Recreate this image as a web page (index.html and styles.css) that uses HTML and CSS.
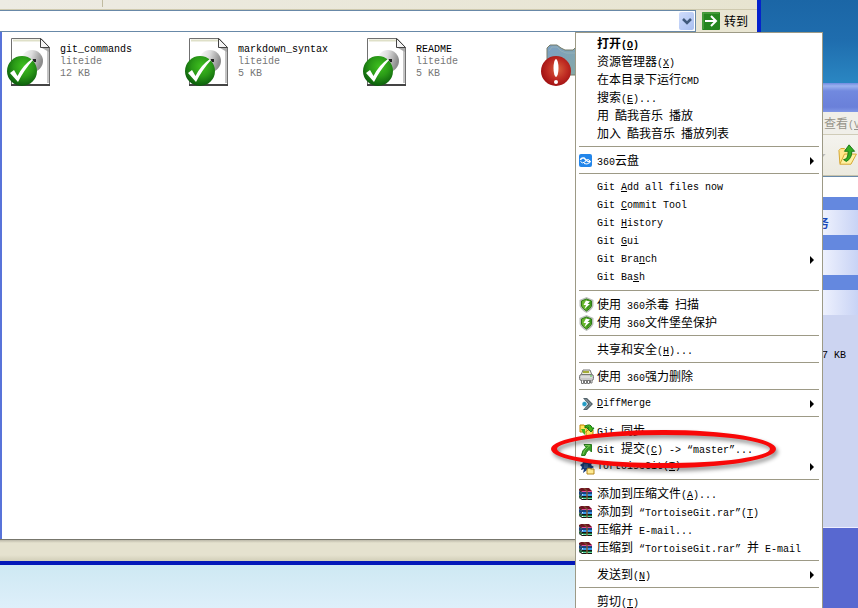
FILE: index.html
```html
<!DOCTYPE html>
<html lang="zh-CN">
<head>
<meta charset="utf-8">
<title>TortoiseGit</title>
<link rel="stylesheet" href="styles.css">
</head>
<body>
<svg class="defs" aria-hidden="true">
  <defs>
    <radialGradient id="green" cx=".55" cy=".35" r=".65"><stop offset="0" stop-color="#3fc11f"/><stop offset=".5" stop-color="#2a9a17"/><stop offset="1" stop-color="#0b5c0c"/></radialGradient>
    <radialGradient id="red" cx=".55" cy=".45" r=".6"><stop offset="0" stop-color="#d8603c"/><stop offset=".55" stop-color="#be2a22"/><stop offset="1" stop-color="#9c0d10"/></radialGradient>
    <linearGradient id="ball" x2="1" y2=".3"><stop offset="0" stop-color="#fff"/><stop offset=".5" stop-color="#dcdcdc"/><stop offset="1" stop-color="#8c8c8c"/></linearGradient>
    <linearGradient id="folder" x2="1" y2="1"><stop offset="0" stop-color="#7b9fc4"/><stop offset="1" stop-color="#86aaa2"/></linearGradient>
  </defs>
  <symbol id="file" viewBox="0 0 44 50">
    <path d="M4.500 1.500H34L42.500 10.500V47.500H4.500Z" fill="#fff" stroke="#707070"/>
    <path d="M6 3.500H33" stroke="#dfe0c8" stroke-width="2"/>
    <path d="M41 11V46" stroke="#c4c4c4" stroke-width="2"/>
    <path d="M4 48H43" stroke="#444" stroke-width="2"/>
    <path d="M33.500 1.500V10.500H42.500Z" fill="#f4f4f4" stroke="#444"/>
    <path d="M35 11H42V15Z" fill="#aaa"/>
    <ellipse cx="25" cy="24" rx="11" ry="11" fill="url(#ball)"/>
    <path d="M25 22h4v3h-2z" fill="#222"/>
    <circle cx="15" cy="34" r="15" fill="url(#green)"/>
    <path d="M3 36L7 33L10.500 39Q16 28 25 22L26 23Q17 33 11 45Z" fill="#fff"/>
  </symbol>
  <symbol id="folder-alert" viewBox="0 0 44 50">
    <path d="M6 20V11L9 8H16L20 11L24 13H32L35 10H44V38H6Z" fill="url(#folder)" stroke="#777d68"/>
    <path d="M8 14L11 10H16L20 14L25 16H44" fill="none" stroke="#93b0b8"/>
    <circle cx="15" cy="34" r="15" fill="url(#red)"/>
    <ellipse cx="15" cy="31" rx="2.500" ry="9" fill="#fff"/><circle cx="15" cy="45" r="2" fill="#fff"/>
  </symbol>
  <symbol id="cloud" viewBox="0 0 16 16">
    <rect x="0" y="1" width="13" height="13" rx="2" fill="#2386ea"/>
    <path d="M1.500 7Q2 4.500 5 5Q6 6 7.500 7.500Q10 9.500 11.500 8" fill="none" stroke="#fff" stroke-width="1.500"/>
    <path d="M1.500 8.500Q3 11 6 9Q7 6 9.500 6.500Q12 8 11 9.500Q8 12 5 10.500" fill="none" stroke="#fff"/>
  </symbol>
  <symbol id="shield" viewBox="0 0 16 16">
    <path d="M7.500 0L14.500 3V9Q13 13 7.500 16Q2 13 .5 9V3Z" fill="#b9bdb9"/>
    <path d="M7.500 2L12.500 4V9Q11 12 7.500 14Q4 12 2.500 9V4Z" fill="#66b52c" stroke="#2f7d17"/>
    <path d="M7.500 2.500L12 4.500V8L7.500 14Z" fill="#3c941c"/>
    <path d="M7 3.500L4.500 8H7L5.500 12L11 7H8.500L11 4.500Z" fill="#fff"/>
  </symbol>
  <symbol id="shred" viewBox="0 0 16 16">
    <path d="M4 1H11L13 6H2Z" fill="#eef0d8" stroke="#777"/><path d="M4 3H10" stroke="#a4ac38" stroke-width="2"/>
    <rect x=".5" y="5.500" width="14" height="6" rx="2" fill="#c9c9c9" stroke="#777"/>
    <path d="M2 8H13" stroke="#eee"/><path d="M11 7H13" stroke="#4c4"/>
    <path d="M2.500 11V14.500H4.500V12M5.500 12V14.500H7.500V12M8.500 12V14.500H10.500V12M11.500 12V14H13V11" fill="#fff" stroke="#777"/>
  </symbol>
  <symbol id="diff" viewBox="0 0 16 16">
    <path d="M4 2H8L14 8L8 14H4L9 8Z" fill="#53636b"/><path d="M6.500 3L11.500 8L6.500 13" fill="none" stroke="#98a6ac"/>
    <circle cx="5.500" cy="8" r="2.500" fill="#219bc4" stroke="#fff" stroke-width=".5"/>
  </symbol>
  <symbol id="sync" viewBox="0 0 16 16">
    <path d="M1 2H5L6 3H8V9H1Z" fill="#ffe45c" stroke="#bd8500"/>
    <path d="M9 7H14V13H7V9Z" fill="#ffe45c" stroke="#bd8500"/>
    <path d="M6 3Q12 0 13 5H15L12 9L8 5H10Q9 3 6 5Z" fill="#42b51c" stroke="#11780d"/>
    <path d="M2 6H6V12L4 10Z" fill="#42b51c"/>
  </symbol>
  <symbol id="commit" viewBox="0 0 16 16">
    <path d="M5 3.500H12.500V11L10 8.500Q7 11 6 14.500H2.500Q3 9 7 6.500Z" fill="#359c27" stroke="#2b7d20"/>
    <path d="M6 4.500H11L8 7Q5 9 4 13.500" fill="none" stroke="#7acb55"/>
  </symbol>
  <symbol id="tortoise" viewBox="0 0 16 16">
    <path d="M1 6L4 4L3 2L6 3L8 1L10 3L14 3L12 6L15 8L12 10V13L8 11L4 14L5 10L2 11L3 8Z" fill="#173c79"/>
    <path d="M5 5H9V9H5Z" fill="#365a8c"/><path d="M8 10L10 9L12 10H15V15H8Z" fill="#ffeb91" stroke="#b4871c"/>
  </symbol>
  <symbol id="rar" viewBox="0 0 16 16">
    <path d="M0 3L2 2H10L13 5V6H3L0 4Z" fill="#6e1420"/><path d="M3 5H13V6H3Z" fill="#e04a98"/>
    <path d="M0 4L3 6H13V7H3L0 5ZM0 8L3 10H13V11H3L0 9ZM0 11L3 13H13V14H3L0 12Z" fill="#151515"/>
    <path d="M0 5L3 7V6H13V8H3V10L0 8Z" fill="#18427e"/><path d="M4 8H13V10H3Z" fill="#3a9aea"/>
    <path d="M0 9L3 11H13V12H3V13L0 11Z" fill="#176032"/><path d="M4 12H13V13H4Z" fill="#5edba1"/>
    <path d="M6 2L9 5V14H7V5L4 2Z" fill="#805c36" opacity=".7"/>
  </symbol>
  <symbol id="arrow" viewBox="0 0 4 8"><path d="M0 0L4 4L0 8Z" fill="#000"/></symbol>
</svg>

<section class="window back" aria-label="后方窗口">
  <div class="title"></div>
  <div class="menubar"><span class="zh">查看</span>(<u>V</u>)</div>
  <div class="tools">
    <svg width="4" height="3" viewBox="0 0 4 3"><path d="M0 0H4L1 3Z" fill="#bbb"/></svg>
    <svg width="22" height="24" viewBox="0 0 22 24"><path d="M1 7L3 5H7L9 7H14V21H2Z" fill="#ffe88a" stroke="#d3a22b"/><path d="M2 22L7 11H20L14 22Z" fill="#fff0a0" stroke="#d3a22b"/><path d="M6 17Q11 17 11 8H7L12 1L18 8H15Q15 16 9 19Z" fill="#31ad23" stroke="#197313"/></svg>
  </div>
  <div class="address-strip"></div>
  <div class="tasks">
    <div class="task"><span class="zh">务</span></div>
    <div class="task"></div>
    <div class="task open"></div>
    <div class="details">7 KB</div>
  </div>
</section>

<main class="window explorer">
  <div class="toolbar"><span></span></div>
  <div class="address">
    <div class="combo">
      <input type="text" aria-label="地址">
      <button class="drop" aria-label="展开地址"><svg width="10" height="7" viewBox="0 0 10 7"><path d="M1 1L5 5L9 1" fill="none" stroke="#40597c" stroke-width="2.500"/></svg></button>
    </div>
    <button class="go"><svg width="18" height="18" viewBox="0 0 18 18"><rect width="18" height="18" rx="1" fill="#25851f"/><path d="M1 17V1H17" fill="none" stroke="#62af55"/><path d="M3 9H14M9 4L14 9L9 14" fill="none" stroke="#fff" stroke-width="2"/></svg><span class="zh">转到</span></button>
  </div>
  <div class="files">
    <div class="tile"><svg><use href="#file"/></svg><p>git_commands<small>liteide</small><small>12 KB</small></p></div>
    <div class="tile"><svg><use href="#file"/></svg><p>markdown_syntax<small>liteide</small><small>5 KB</small></p></div>
    <div class="tile"><svg><use href="#file"/></svg><p>README<small>liteide</small><small>5 KB</small></p></div>
    <div class="tile"><svg><use href="#folder-alert"/></svg></div>
  </div>
  <div class="status"></div>
</main>

<nav class="menu" aria-label="快捷菜单">
  <button class="default"><i></i><span><span class="zh">打开</span>(<u>O</u>)</span></button>
  <button><i></i><span><span class="zh">资源管理器</span>(<u>X</u>)</span></button>
  <button><i></i><span><span class="zh">在本目录下运行</span>CMD</span></button>
  <button><i></i><span><span class="zh">搜索</span>(<u>E</u>)...</span></button>
  <button><i></i><span><span class="zh">用</span> <span class="zh">酷我音乐</span> <span class="zh">播放</span></span></button>
  <button><i></i><span><span class="zh">加入</span> <span class="zh">酷我音乐</span> <span class="zh">播放列表</span></span></button>
  <hr>
  <button><svg class="icon"><use href="#cloud"/></svg><span>360<span class="zh">云盘</span></span><svg class="more"><use href="#arrow"/></svg></button>
  <hr>
  <button><i></i><span>Git <u>A</u>dd all files now</span></button>
  <button><i></i><span>Git <u>C</u>ommit Tool</span></button>
  <button><i></i><span>Git <u>H</u>istory</span></button>
  <button><i></i><span>Git <u>G</u>ui</span></button>
  <button><i></i><span>Git Bra<u>n</u>ch</span><svg class="more"><use href="#arrow"/></svg></button>
  <button><i></i><span>Git Ba<u>s</u>h</span></button>
  <hr>
  <button><svg class="icon"><use href="#shield"/></svg><span><span class="zh">使用</span> 360<span class="zh">杀毒</span> <span class="zh">扫描</span></span></button>
  <button><svg class="icon"><use href="#shield"/></svg><span><span class="zh">使用</span> 360<span class="zh">文件堡垒保护</span></span></button>
  <hr>
  <button><i></i><span><span class="zh">共享和安全</span>(<u>H</u>)...</span></button>
  <hr>
  <button><svg class="icon"><use href="#shred"/></svg><span><span class="zh">使用</span> 360<span class="zh">强力删除</span></span></button>
  <hr>
  <button><svg class="icon"><use href="#diff"/></svg><span><u>D</u>iffMerge</span><svg class="more"><use href="#arrow"/></svg></button>
  <hr>
  <button><svg class="icon"><use href="#sync"/></svg><span>Git <span class="zh">同步</span>..</span></button>
  <button><svg class="icon"><use href="#commit"/></svg><span>Git <span class="zh">提交</span>(<u>C</u>) -&gt; “master”...</span></button>
  <button><svg class="icon"><use href="#tortoise"/></svg><span>TortoiseGit(<u>T</u>)</span><svg class="more"><use href="#arrow"/></svg></button>
  <hr>
  <button><svg class="icon"><use href="#rar"/></svg><span><span class="zh">添加到压缩文件</span>(<u>A</u>)...</span></button>
  <button><svg class="icon"><use href="#rar"/></svg><span><span class="zh">添加到</span> “TortoiseGit.rar”(<u>T</u>)</span></button>
  <button><svg class="icon"><use href="#rar"/></svg><span><span class="zh">压缩并</span> E-mail...</span></button>
  <button><svg class="icon"><use href="#rar"/></svg><span><span class="zh">压缩到</span> “TortoiseGit.rar” <span class="zh">并</span> E-mail</span></button>
  <hr>
  <button><i></i><span><span class="zh">发送到</span>(<u>N</u>)</span><svg class="more"><use href="#arrow"/></svg></button>
  <hr>
  <button><i></i><span><span class="zh">剪切</span>(<u>T</u>)</span></button>
</nav>
<svg class="ring" viewBox="0 0 236 50" aria-hidden="true"><path fill-rule="evenodd" fill="#f80808" d="M2 22A112.500 19 0 0 1 227 22A112.500 19 0 0 1 2 22ZM8 22A106.500 14 0 0 0 221 22A106.500 14 0 0 0 8 22Z"/></svg>
</body>
</html>
```
FILE: styles.css
```css
* { box-sizing: border-box; }
html, body { height: 100%; }
body {
  position: relative;
  margin: 0;
  overflow: hidden;
  background: linear-gradient(#1b66a6, #1f6dae 40px, #2a86c2 82px, #cce8f2 560px, #deeffa 608px);
  font: 10px/18px "Liberation Mono", "Noto Sans CJK SC", monospace;
  color: #000;
}
button, input { font: inherit; color: inherit; border: 0; padding: 0; margin: 0; background: none; }
.zh { font-family: "Noto Sans CJK SC", sans-serif; font-size: 12px; }
.defs { position: absolute; width: 0; height: 0; }
.window { position: absolute; display: flex; flex-direction: column; }

.explorer {
  top: 0;
  left: 0;
  right: 97px;
  height: 565px;
  background: #e9e6d3;
  border: solid #0422cc;
  border-width: 0 4px 4px 0;
  border-bottom-color: #0418b8;
}
.toolbar { height: 10px; padding-left: 102px; background: linear-gradient(90deg, #edebe3, #e7e4d0); border-bottom: 1px solid #cec9ae; }
.toolbar span { display: block; width: 1px; height: 7px; background: #c0bba0; }
.address { display: flex; height: 22px; }
.combo { display: flex; flex: 1; background: #fff; border: 1px solid #6889a8; border-left: 0; padding: 1px; }
.combo input { flex: 1; min-width: 0; outline: 0; }
.drop { width: 15px; display: grid; place-items: center; border-radius: 2px; background: linear-gradient(135deg, #cfdcfc, #a9bff0); }
.go { display: flex; align-items: center; gap: 4px; width: 61px; padding-left: 6px; }
.files { flex: 1; display: flex; background: #fff; border-left: 2px solid #5873d9; padding: 5px 0 0 5px; overflow: hidden; }
.tile { flex: none; display: flex; gap: 9px; width: 178px; }
.tile svg { width: 44px; height: 50px; }
.tile p { margin: 7px 0 0; line-height: 12px; }
.tile small { display: block; font-size: 10px; color: #777; }
.status { height: 22px; border-top: 1px solid #77766c; background: linear-gradient(#bcb9a9, #e5e2cf 3px, #e5e2cf 15px, #d2cfb9); }

.back { top: 83px; left: 817px; right: 0; bottom: 0; background: #5868d0; overflow: hidden; white-space: nowrap; }
.title { height: 29px; background: linear-gradient(#6f8be0, #9cb2ef 3px, #7189df 8px, #6a80d9 24px, #8097e6); }
.menubar { height: 23px; padding: 2px 0 0 7px; background: #f0efe9; border-bottom: 1px solid #d0ccb8; color: #96948a; }
.tools { display: flex; align-items: center; gap: 12px; height: 41px; padding-left: 5px; background: linear-gradient(#f4f3ee, #eceadf); border-bottom: 1px solid #c8c4ad; }
.address-strip { height: 21px; border-top: 1px solid #6889a8; background: #fff; }
.tasks { background: #6488df; padding-top: 13px; }
.task { height: 25px; margin-bottom: 15px; background: linear-gradient(90deg, #f4f6ff, #c8d3f5); color: #1746b8; font-weight: bold; line-height: 25px; }
.task.open { margin-bottom: 0; }
.details { height: 213px; padding: 32px 0 0 5px; background: #ccd4f1; border-bottom: 1px solid #eef; }

.menu {
  position: absolute;
  top: 32px;
  left: 575px;
  width: 248px;
  padding: 2px 3px;
  background: #fff;
  border: 1px solid #9d9a86;
}
.menu button { display: flex; align-items: center; width: 100%; height: 18px; text-align: left; white-space: pre; }
.menu .default { font-weight: bold; }
.menu i, .icon { flex: none; width: 16px; height: 16px; margin-right: 2px; }
.menu .more { width: 4px; height: 8px; margin: 0 5px 0 auto; }
.menu hr { height: 1px; margin: 3px 0 5px; border: 0; background: #9d9a86; }
u { text-underline-offset: 1px; }

.ring { position: absolute; top: 427px; left: 549px; width: 236px; height: 50px; filter: drop-shadow(2px 3px 2px rgba(0, 0, 0, .45)); pointer-events: none; }
```
